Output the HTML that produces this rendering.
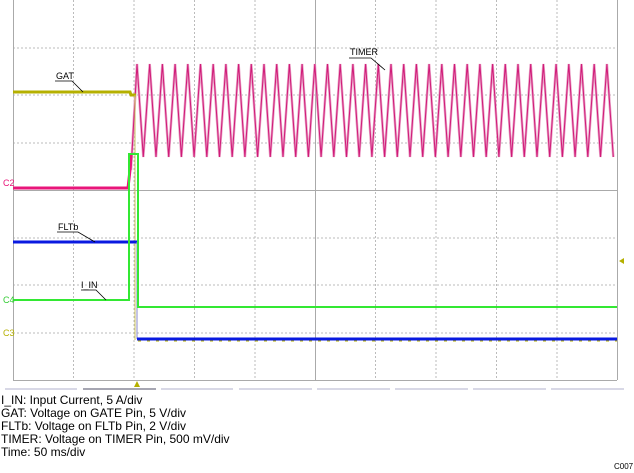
<!DOCTYPE html>
<html><head><meta charset="utf-8"><style>
body{margin:0;background:#fff;width:634px;height:473px;overflow:hidden;font-family:"Liberation Sans",sans-serif}
.t{position:absolute;left:1px;font-size:12px;color:#000;line-height:13px}
</style></head><body>
<svg id="s" width="634" height="473" style="position:absolute;left:0;top:0" xmlns="http://www.w3.org/2000/svg">
<g stroke="#bbb" stroke-dasharray="2,2" stroke-width="1">
<line x1="73.5" y1="0" x2="73.5" y2="380"/><line x1="134" y1="0" x2="134" y2="380"/><line x1="194.5" y1="0" x2="194.5" y2="380"/><line x1="255" y1="0" x2="255" y2="380"/><line x1="375.5" y1="0" x2="375.5" y2="380"/><line x1="436" y1="0" x2="436" y2="380"/><line x1="496.5" y1="0" x2="496.5" y2="380"/><line x1="557" y1="0" x2="557" y2="380"/>
<line x1="13" y1="48" x2="617" y2="48"/><line x1="13" y1="95" x2="617" y2="95"/><line x1="13" y1="143" x2="617" y2="143"/><line x1="13" y1="238" x2="617" y2="238"/><line x1="13" y1="285" x2="617" y2="285"/><line x1="13" y1="333" x2="617" y2="333"/>
</g>
<g stroke="#aaa" stroke-width="1">
<line x1="315.5" y1="0" x2="315.5" y2="380"/><line x1="13" y1="190.5" x2="617" y2="190.5"/>
<line x1="13.5" y1="0" x2="13.5" y2="380"/><line x1="617.5" y1="0" x2="617.5" y2="380"/><line x1="13" y1="380.5" x2="617" y2="380.5"/>
</g>
<g stroke="#ccd" stroke-width="1.5">
<line x1="5" y1="389" x2="77" y2="389"/><line x1="161" y1="389" x2="233" y2="389"/><line x1="239" y1="389" x2="312" y2="389"/><line x1="317" y1="389" x2="390" y2="389"/><line x1="395" y1="389" x2="468" y2="389"/><line x1="473" y1="389" x2="546" y2="389"/><line x1="551" y1="389" x2="624" y2="389"/>
</g>
<line x1="83" y1="389" x2="156" y2="389" stroke="#889" stroke-width="1.5"/>
<polygon points="134,387 140,387 137,381" fill="#b5b000"/>
<polygon points="619,261 624,258 624,264" fill="#b5b000"/>
<polyline id="tri" fill="none" stroke="#eaa0c6" stroke-width="2.5"/>
<polyline id="tri2" fill="none" stroke="#d01a78" stroke-width="1"/>
<polyline points="13,92 130,92 131,95 136,95" fill="none" stroke="#b5b000" stroke-width="3"/>
<line x1="135" y1="95" x2="135" y2="340" stroke="#c8c060" stroke-width="1"/>
<polyline points="13,188 128,188 130,170 131,155" fill="none" stroke="#e8157a" stroke-width="3"/>
<polyline points="13,242 137,242" fill="none" stroke="#0a1ae0" stroke-width="3"/>
<line x1="137" y1="242" x2="137" y2="339" stroke="#8888cc" stroke-width="1"/>
<line x1="137" y1="339" x2="617" y2="339" stroke="#0a1ae0" stroke-width="3"/>
<polyline points="13,300 129,300 129,154 138,154 138,307 617,307" fill="none" stroke="#33e833" stroke-width="2"/>
<line x1="138" y1="341" x2="617" y2="341" stroke="#b5b000" stroke-width="1" stroke-dasharray="3,6"/>
<g font-family="Liberation Sans,sans-serif" font-size="9">
<text x="3" y="186" fill="#e8157a">C2</text>
<text x="3" y="303" fill="#33cc33">C4</text>
<text x="3" y="336" fill="#b5b000">C3</text>
<text x="56" y="79" fill="#000">GAT</text>
<text x="58" y="230" fill="#000">FLTb</text>
<text x="81" y="288" fill="#000">I_IN</text>
<text x="350" y="55" fill="#000">TIMER</text>
<text x="614" y="469" fill="#000" font-size="8">C007</text>
</g>
<g stroke="#000" stroke-width="0.8" fill="none">
<polyline points="55,81 72,81 83,92"/><polyline points="57,232 78,232 95,242"/><polyline points="81,290 96,290 106,300"/><polyline points="349,58 371,58 385,70"/>
</g>
</svg>
<div class="t" style="top:394px">I_IN: Input Current, 5 A/div<br>GAT: Voltage on GATE Pin, 5 V/div<br>FLTb: Voltage on FLTb Pin, 2 V/div<br>TIMER: Voltage on TIMER Pin, 500 mV/div<br>Time: 50 ms/div</div>
<script>
var p="131,170 ";for(var x=137;x<617;x+=12.7){p+=x.toFixed(1)+",64 ";var t=x+6.35;if(t<617)p+=t.toFixed(1)+",157 ";}
document.getElementById("tri").setAttribute("points",p);document.getElementById("tri2").setAttribute("points",p);
</script>
</body></html>
